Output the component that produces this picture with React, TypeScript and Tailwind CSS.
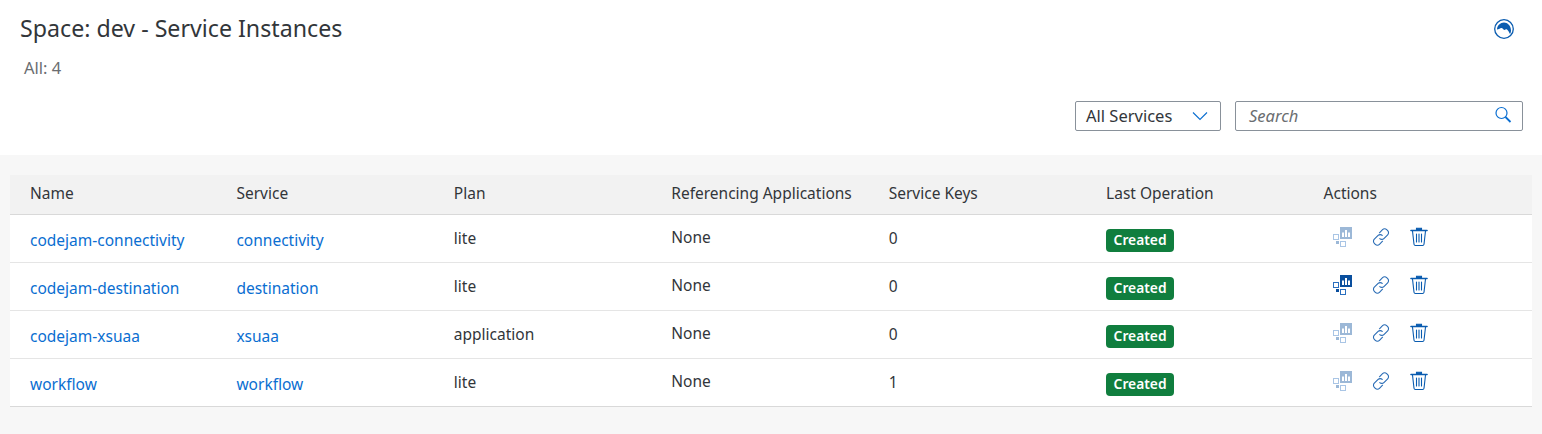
import React from 'react'

const rows = [
  { name: 'codejam-connectivity', service: 'connectivity', plan: 'lite', keys: '0', dashboard: false },
  { name: 'codejam-destination', service: 'destination', plan: 'lite', keys: '0', dashboard: true },
  { name: 'codejam-xsuaa', service: 'xsuaa', plan: 'application', keys: '0', dashboard: false },
  { name: 'workflow', service: 'workflow', plan: 'lite', keys: '1', dashboard: false },
]

const headers = ['Name', 'Service', 'Plan', 'Referencing Applications', 'Service Keys', 'Last Operation', 'Actions']

function DashboardIcon ({ active }: { active: boolean }): React.ReactElement {
  return (
    <svg width="20" height="20" viewBox="0 0 20 20" className={active ? 'opacity-100' : 'opacity-40'}>
      <rect x="7" y="0" width="12" height="12" fill="#0a4f9e" />
      <rect x="9" y="5.500" width="2" height="4.500" fill="#fff" />
      <rect x="12" y="3" width="2" height="7" fill="#fff" />
      <rect x="15" y="5.500" width="2" height="4.500" fill="#fff" />
      <rect x="0.500" y="7.500" width="5" height="5" fill="none" stroke="#2a6fbf" strokeWidth="1" />
      <rect x="3" y="14" width="3" height="3" fill="#0a4f9e" />
      <rect x="7.500" y="14.500" width="5" height="5" fill="none" stroke="#2a6fbf" strokeWidth="1" />
    </svg>
  )
}

function LinkIcon (): React.ReactElement {
  return (
    <svg width="20" height="20" viewBox="0 0 18 18" fill="none" stroke="#2a6cb5" strokeWidth="1" strokeLinecap="round" strokeLinejoin="round">
      <path d="M7.600 5.200 10.400 2.400a2.600 2.600 0 0 1 3.700 0l.9.9a2.600 2.600 0 0 1 0 3.700l-3.400 3.400a2.600 2.600 0 0 1-3.700 0" />
      <path d="M10.400 12.800 7.600 15.600a2.600 2.600 0 0 1-3.700 0L3 14.700a2.600 2.600 0 0 1 0-3.700l3.400-3.400a2.600 2.600 0 0 1 3.700 0" />
    </svg>
  )
}

function TrashIcon (): React.ReactElement {
  return (
    <svg width="18" height="20" viewBox="0 0 18 20" fill="none" stroke="#0a5cb0" strokeWidth="1.100" strokeLinecap="round">
      <path d="M1 3.500h16" strokeWidth="1.600" />
      <path d="M6.500 3V1.200h5V3" fill="#0a5cb0" />
      <path d="M2.500 4 4 17.200c.1.800.6 1.300 1.400 1.300h7.200c.8 0 1.300-.5 1.400-1.300L15.500 4" />
      <path d="M6.500 7v8M9 7v8M11.500 7v8" />
    </svg>
  )
}

export default function App (): React.ReactElement {
  return (
    <div className="h-[434px] w-[1542px] overflow-hidden bg-[#f7f7f7] font-['Noto_Sans','Liberation_Sans',sans-serif] text-[#32363a]">
      <div className="h-[155px] bg-white pt-[13px] pr-[19px] pl-5">
        <div className="flex items-start justify-between">
          <h1 className="text-[23.2px] leading-[30px] font-normal">Space: dev - Service Instances</h1>
          <svg width="22" height="22" viewBox="0 0 22 22" className="mt-[5px] mr-[8px]">
            <circle cx="11" cy="11" r="9.300" fill="none" stroke="#0a5cb0" strokeWidth="1.300" />
            <path d="M4 11.500C4 7.500 7.500 4.500 11 4.500s7 3 7 8c0 1.500-.4 2.500-1 3.500-1-1.500-1.500-3.500-3-4.500-1-.7-1.500.5-2.500.5S9.500 9.500 8 10c-1.500.5-2.500 1.500-4 1.500z" fill="#0a5cb0" />
          </svg>
        </div>
        <p className="mt-[15px] ml-1 text-[16.5px] leading-5 text-[#6a6d70]">All: 4</p>
        <div className="mt-[23px] flex justify-end gap-[14px]">
          <div className="flex h-[30px] w-[146px] items-center justify-between rounded-[2px] border border-[#89919a] bg-white pr-[12px] pl-[10px] text-[16.5px]">
            <span>All Services</span>
            <svg width="16" height="10" viewBox="0 0 16 10" fill="none" stroke="#0a6ed1" strokeWidth="1.100">
              <path d="M1 1.500 8 8.500l7-7" />
            </svg>
          </div>
          <div className="flex h-[30px] w-[288px] items-center justify-between rounded-[2px] border border-[#89919a] bg-white pr-[10px] pl-[13px] text-[16.5px]">
            <span className="text-[#6a6d70] italic">Search</span>
            <svg width="18" height="18" viewBox="0 0 18 18" fill="none" stroke="#0a6ed1" className="mb-[3px]">
              <circle cx="7.500" cy="7" r="5.500" strokeWidth="1.200" />
              <path d="m11.500 11 5 5" strokeWidth="1.800" />
            </svg>
          </div>
        </div>
      </div>

      <div className="px-[10px] pt-5">
        <table className="w-full table-fixed border-collapse bg-white text-[15.5px]">
          <thead>
            <tr className="h-[39px] border-b border-[#d9d9d9] bg-[#f2f2f2]">
              {headers.map((h) => (
                <th key={h} className="pr-[10px] pb-[2px] pl-[9px] text-left font-normal whitespace-nowrap first:pl-5">{h}</th>
              ))}
            </tr>
          </thead>
          <tbody>
            {rows.map((row) => (
              <tr key={row.name} className="h-[48px] border-b border-[#e5e5e5] last:border-[#d9d9d9]">
                <td className="pt-[6px] pr-[10px] pl-5 text-[#0a6ed1]">{row.name}</td>
                <td className="pt-[6px] pr-[10px] pl-[9px] text-[#0a6ed1]">{row.service}</td>
                <td className="pt-[1px] pr-[10px] pl-[9px]">{row.plan}</td>
                <td className="pr-[10px] pb-[1px] pl-[9px]">None</td>
                <td className="pt-[1px] pr-[10px] pl-[9px]">{row.keys}</td>
                <td className="pt-[4px] pr-[10px] pl-[9px]">
                  <span className="inline-block h-[23px] rounded-[4px] bg-[#107e3e] px-[7.500px] text-[13.800px] leading-[22px] font-semibold text-white">Created</span>
                </td>
                <td className="pr-[10px] pb-[3px] pl-[9px]">
                  <div className="flex items-center">
                    <span className="ml-[9px]"><DashboardIcon active={row.dashboard} /></span>
                    <span className="ml-[18px]"><LinkIcon /></span>
                    <span className="ml-[19px]"><TrashIcon /></span>
                  </div>
                </td>
              </tr>
            ))}
          </tbody>
        </table>
      </div>
    </div>
  )
}
